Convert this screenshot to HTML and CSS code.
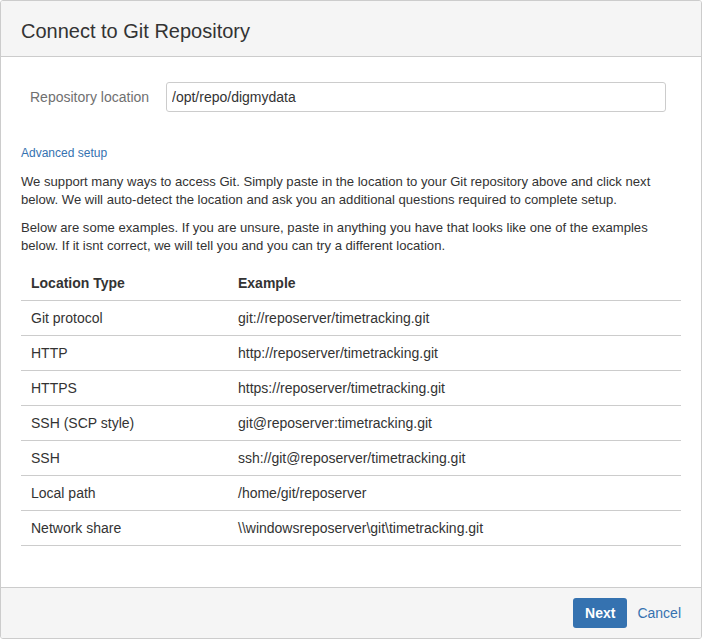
FILE: index.html
```html
<!DOCTYPE html>
<html>
<head>
<meta charset="utf-8">
<link rel="stylesheet" href="styles.css">
</head>
<body>
<div class="dialog">
  <div class="dialog-header"><h2 class="title">Connect to Git Repository</h2></div>
  <div class="dialog-content">
    <div class="field">
      <label class="field-label">Repository location</label>
      <input class="text-input" type="text" value="/opt/repo/digmydata">
    </div>
    <a class="adv-link" href="#">Advanced setup</a>
    <p class="para">We support many ways to access Git. Simply paste in the location to your Git repository above and click next below. We will auto-detect the location and ask you an additional questions required to complete setup.</p>
    <p class="para">Below are some examples. If you are unsure, paste in anything you have that looks like one of the examples below. If it isnt correct, we will tell you and you can try a different location.</p>
    <table class="examples">
      <thead>
        <tr><th class="col-type">Location Type</th><th>Example</th></tr>
      </thead>
      <tbody>
        <tr><td>Git protocol</td><td>git://reposerver/timetracking.git</td></tr>
        <tr><td>HTTP</td><td>http://reposerver/timetracking.git</td></tr>
        <tr><td>HTTPS</td><td>https://reposerver/timetracking.git</td></tr>
        <tr><td>SSH (SCP style)</td><td>git@reposerver:timetracking.git</td></tr>
        <tr><td>SSH</td><td>ssh://git@reposerver/timetracking.git</td></tr>
        <tr><td>Local path</td><td>/home/git/reposerver</td></tr>
        <tr><td>Network share</td><td>\\windowsreposerver\git\timetracking.git</td></tr>
      </tbody>
    </table>
  </div>
  <div class="dialog-footer">
    <button class="btn-primary">Next</button>
    <a class="cancel-link" href="#">Cancel</a>
  </div>
</div>
</body>
</html>
```

FILE: styles.css
```css
html, body {
  margin: 0;
  padding: 0;
  background: #ffffff;
}
body {
  font-family: "Liberation Sans", Arial, sans-serif;
  font-size: 14px;
  color: #333333;
}
.dialog {
  width: 702px;
  height: 639px;
  box-sizing: border-box;
  border: 1px solid #cccccc;
  border-radius: 3px;
  display: flex;
  flex-direction: column;
  overflow: hidden;
  background: #ffffff;
}
.dialog-header {
  height: 55px;
  flex: none;
  background: #f5f5f5;
  border-bottom: 1px solid #cccccc;
  display: flex;
  align-items: center;
  padding: 0 20px;
}
.title {
  margin: 0;
  font-size: 20px;
  font-weight: normal;
  color: #333333;
  line-height: 24px;
  padding-top: 4px;
}
.dialog-content {
  flex: 1;
  padding: 25px 20px 20px 20px;
}
.field {
  display: flex;
  align-items: center;
  gap: 15px;
}
.field-label {
  padding-left: 9px;
  width: 121px;
  color: #707070;
  font-size: 14px;
  white-space: nowrap;
}
.text-input {
  width: 500px;
  height: 30px;
  box-sizing: border-box;
  border: 1px solid #cccccc;
  border-radius: 3px;
  padding: 0 5px;
  font-family: "Liberation Sans", Arial, sans-serif;
  font-size: 14px;
  color: #333333;
  margin: 0;
}
.adv-link {
  display: block;
  margin-top: 33px;
  font-size: 12px;
  line-height: 16px;
  color: #3572b0;
  text-decoration: none;
}
.para {
  margin: 10px 0 0 0;
  font-size: 13.1px;
  line-height: 18px;
}
.adv-link + .para {
  margin-top: 12px;
}
.examples {
  width: 100%;
  border-collapse: collapse;
  margin-top: 11px;
}
.examples th {
  text-align: left;
  font-weight: bold;
  padding: 7px 10px;
  line-height: 20px;
  border-bottom: 1px solid #cccccc;
}
.examples td {
  padding: 7px 10px;
  line-height: 20px;
  border-bottom: 1px solid #cccccc;
}
.col-type {
  width: 187px;
}
.dialog-footer {
  flex: none;
  height: 50px;
  background: #f5f5f5;
  border-top: 1px solid #cccccc;
  display: flex;
  align-items: center;
  justify-content: flex-end;
  padding: 0 20px;
  gap: 10px;
}
.btn-primary {
  height: 30px;
  padding: 0 12px;
  border: none;
  border-radius: 3px;
  background: #3572b0;
  color: #ffffff;
  font-family: "Liberation Sans", Arial, sans-serif;
  font-size: 14px;
  font-weight: bold;
  margin: 0;
  cursor: pointer;
}
.cancel-link {
  color: #3572b0;
  text-decoration: none;
  font-size: 14px;
}
```
